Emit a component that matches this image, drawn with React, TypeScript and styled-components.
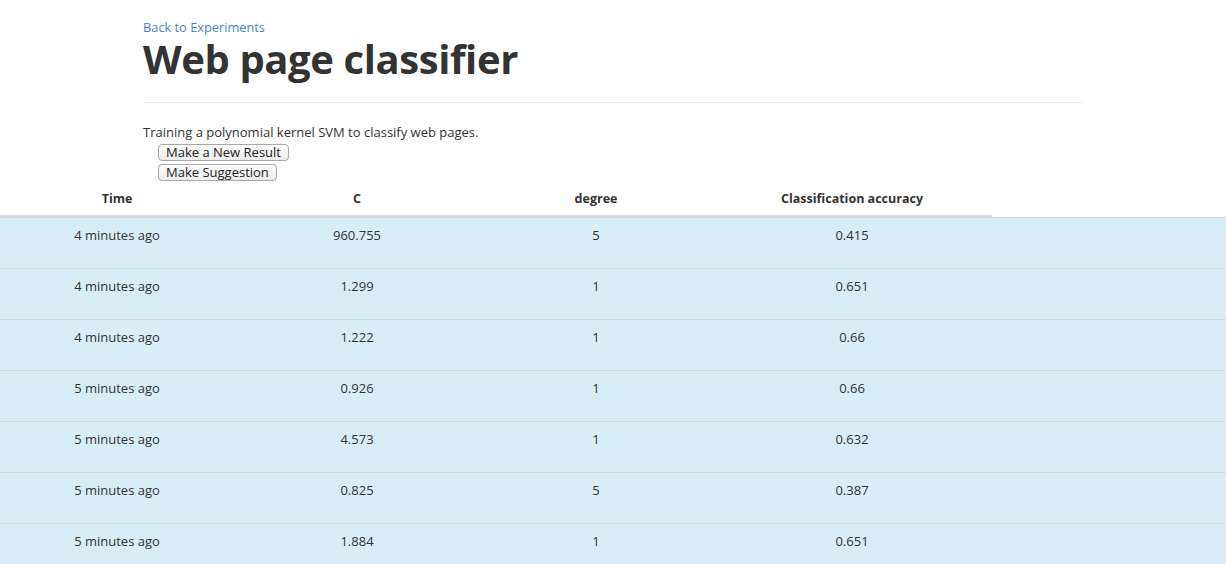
import React from "react";
import styled, { createGlobalStyle } from "styled-components";

interface ResultRow {
	time: string,
	c: string,
	degree: string,
	accuracy: string,
}

const results: ResultRow[] = [
	{ time: "4 minutes ago", c: "960.755", degree: "5", accuracy: "0.415" },
	{ time: "4 minutes ago", c: "1.299", degree: "1", accuracy: "0.651" },
	{ time: "4 minutes ago", c: "1.222", degree: "1", accuracy: "0.66" },
	{ time: "5 minutes ago", c: "0.926", degree: "1", accuracy: "0.66" },
	{ time: "5 minutes ago", c: "4.573", degree: "1", accuracy: "0.632" },
	{ time: "5 minutes ago", c: "0.825", degree: "5", accuracy: "0.387" },
	{ time: "5 minutes ago", c: "1.884", degree: "1", accuracy: "0.651" },
];

const GlobalStyle = createGlobalStyle`
	html, body {
		margin: 0;
		padding: 0;
		background: #fff;
		font-family: "Open Sans", "Liberation Sans", sans-serif;
		color: #333;
		overflow: hidden;
	}
`;

const Page = styled.div`
	width: 1226px;
	height: 564px;
	overflow: hidden;
`;

const Container = styled.div`
	width: 940px;
	margin: 0 auto;
	padding-top: 18px;
`;

const BackLink = styled.a`
	display: block;
	font-size: 12.8px;
	line-height: 18px;
	color: #4a86c8;
	text-decoration: none;
`;

const Title = styled.h1`
	margin: 3px 0 0;
	font-size: 40px;
	line-height: 40px;
	font-weight: 700;
	letter-spacing: -0.4px;
	color: #333;
`;

const Divider = styled.hr`
	margin: 23px 0 20px;
	border: 0;
	border-top: 1px solid #eee;
`;

const Description = styled.p`
	margin: 0;
	font-size: 13px;
	line-height: 18px;
`;

const Actions = styled.div`
	display: flex;
	flex-direction: column;
	align-items: flex-start;
	gap: 3px;
	margin-top: 3px;
	padding-left: 15px;
`;

const Button = styled.button`
	height: 17px;
	padding: 0 7px;
	font-family: inherit;
	font-size: 13px;
	line-height: 15px;
	color: #222;
	background: linear-gradient(#fdfdfd, #ececec);
	border: 1px solid #a8a8a8;
	border-radius: 4px;
`;

const Table = styled.div`
	margin-top: 1px;
`;

const HeadRow = styled.div`
	display: grid;
	grid-template-columns: 234px 246px 232px 280px;
	width: 992px;
	height: 33px;
	border-bottom: 2px solid #ddd;
`;

const HeadCell = styled.div`
	text-align: center;
	font-size: 12.5px;
	font-weight: 700;
	line-height: 33px;
`;

const Row = styled.div`
	display: grid;
	grid-template-columns: 234px 246px 232px 280px;
	height: 50px;
	background: #d9edf7;
	border-top: 1px solid #d2d9dd;
`;

const Cell = styled.div`
	text-align: center;
	font-size: 13px;
	line-height: 18px;
	padding-top: 8px;
`;

export default function App() {
	return (
		<Page>
			<GlobalStyle />
			<Container>
				<BackLink href="#">Back to Experiments</BackLink>
				<Title>Web page classifier</Title>
				<Divider />
				<Description>Training a polynomial kernel SVM to classify web pages.</Description>
				<Actions>
					<Button>Make a New Result</Button>
					<Button>Make Suggestion</Button>
				</Actions>
			</Container>
			<Table>
				<HeadRow>
					<HeadCell>Time</HeadCell>
					<HeadCell>C</HeadCell>
					<HeadCell>degree</HeadCell>
					<HeadCell>Classification accuracy</HeadCell>
				</HeadRow>
				{results.map((r, i) => (
					<Row key={i}>
						<Cell>{r.time}</Cell>
						<Cell>{r.c}</Cell>
						<Cell>{r.degree}</Cell>
						<Cell>{r.accuracy}</Cell>
					</Row>
				))}
			</Table>
		</Page>
	);
}
